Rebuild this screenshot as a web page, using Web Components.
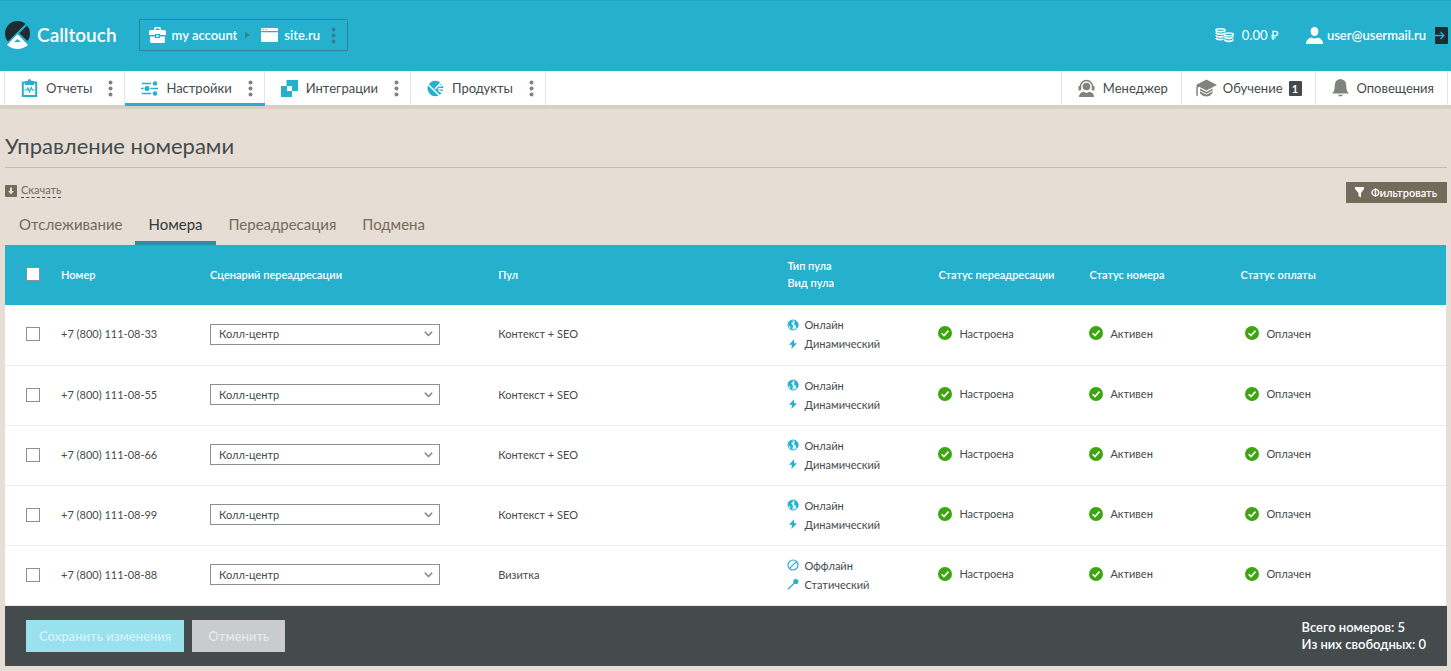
<!DOCTYPE html>
<html lang="ru">
<head>
<meta charset="utf-8">
<title>Calltouch — Управление номерами</title>
<meta name="viewport" content="width=device-width, initial-scale=1">
<style>
  html {
    --brand: #25b0cd;
    --brand-dark: #2a8fa8;
    --ink: #444b4c;
    --sand: #e6ddd4;
    --sand-line: #c6bba9;
    --taupe: #756b5b;
    --grey: #80827d;
    --line: #e4e6e6;
    --green: #3da511;
  }
  body {
    margin: 0;
    background: var(--sand);
    color: var(--ink);
    font: 11px/18px Lato, "Open Sans", sans-serif;
  }
  main { display: block; padding: 0 4px 5px 5px; }
</style>
</head>
<body>
<top-bar></top-bar>
<main-nav>
  <nav-item icon="report" menu>Отчеты</nav-item>
  <nav-item icon="sliders" menu active>Настройки</nav-item>
  <nav-item icon="squares" menu>Интеграции</nav-item>
  <nav-item icon="pie" menu>Продукты</nav-item>
  <nav-item slot="end" icon="agent" muted>Менеджер</nav-item>
  <nav-item slot="end" icon="cap" badge="1" muted wide>Обучение</nav-item>
  <nav-item slot="end" icon="bell" muted>Оповещения</nav-item>
</main-nav>
<main>
  <page-heading>Управление номерами</page-heading>
  <page-tools></page-tools>
  <tab-strip></tab-strip>
  <numbers-table></numbers-table>
  <action-bar>
    <div>Всего номеров: 5</div>
    <div>Из них свободных: 0</div>
  </action-bar>
</main>

<script>
const ICONS = {
  logo: ['0 0 25 28', `<circle cx="12.5" cy="12.5" r="12.5" fill="#1e2b31"/>
    <path d="M12.5 12.5 0 24v4h25v-4z" fill="#25b0cd"/>
    <path d="M22 3 1 24M12.5 12 25 24" stroke="#25b0cd" stroke-width="2.2" fill="none"/>
    <path d="M12.5 13.2 2 24.1Q7 28 12.5 28t10.5-3.900z" fill="#fff"/>
    <path d="M12.5 18l-3.500 3h7z" fill="#25b0cd"/>`],
  briefcase: ['0 0 17 16', `<path d="M5 3V1.500Q5 0 6.500 0h4Q12 0 12 1.500V3h3.500Q17 3 17 4.500V8h-6V7H6v1H0V4.500Q0 3 1.500 3zm1.500 0h4V1.500h-4zM1 9.500h5V11h5V9.500h5v5Q16 16 14.500 16h-12Q1 16 1 14.500zM7.500 8h2v2h-2z" fill="currentColor" fill-rule="evenodd"/>`],
  window: ['0 0 17 14', `<path d="M1 0h15q1 0 1 1v2H0V1q0-1 1-1zM0 4.200h17V13q0 1-1 1H1q-1 0-1-1z" fill="currentColor"/><path d="M2 1.500h1.200M4.500 1.500h1.200" stroke="#25b0cd"/>`],
  coins: ['0 0 19 15', `<g fill="none" stroke="currentColor" stroke-width="1.600"><ellipse cx="5.500" cy="2.200" rx="4.600" ry="1.400"/><path d="M.8 4.500q1 1.700 4.700 1.700t4.700-1.300M.8 7.300q1 1.600 4.700 1.600l3-.3M.8 10q1 1.600 4.700 1.600l3-.3"/><ellipse cx="13.800" cy="6.400" rx="4.500" ry="1.400"/><path d="M9.200 8.700q1 1.700 4.600 1.700t4.500-1.700M9.200 11.400q1 2 4.600 2t4.500-2"/></g>`],
  user: ['0 0 17 17', `<ellipse cx="8.500" cy="4.500" rx="3.900" ry="4.500" fill="currentColor"/><path d="M0 17q0-5 5-6.500Q8.500 12.500 12 10.500q5 1.500 5 6.500z" fill="currentColor"/>`],
  exit: ['0 0 13 17', `<rect width="13" height="17" rx="1" fill="#1e2b31"/><path d="M0 8.500h9M5.500 5l3.500 3.500L5.500 12" fill="none" stroke="#25b0cd" stroke-width="1.300"/>`],
  report: ['0 0 17 18', `<path d="M1.800 3.500h13.400V17H1.800z" fill="none" stroke="currentColor" stroke-width="2"/><path d="M4 2h2.500Q7 0 8.500 0t2 2H13v4H4z" fill="currentColor"/><path d="M3.500 11h2.300l1-2 1.700 4 1.700-4.500 1.200 2.500h2.100" fill="none" stroke="currentColor" stroke-width="1.200"/>`],
  sliders: ['0 0 17 17', `<path d="M1 3.500h9M0 8.500h17M1 13.500h9" stroke="currentColor" stroke-width="1.500"/><circle cx="14" cy="3.500" r="2.300" fill="currentColor"/><circle cx="6" cy="8.500" r="3.400" fill="#fff"/><circle cx="6" cy="8.500" r="2.500" fill="currentColor"/><circle cx="14" cy="13.500" r="2.300" fill="currentColor"/>`],
  squares: ['0 0 17 17', `<path d="M5.500 0H17v11H11v6H0V6h5.500zM6 6v5h5V6z" fill="currentColor" fill-rule="evenodd"/>`],
  pie: ['0 0 17 17', `<circle cx="8.300" cy="8.500" r="7.800" fill="currentColor"/><path d="M0 3.500 14 17M8 9l7-7.500M11 8.800h6M11.500 10.500l5 2.500M12 6.500l4.500-2" stroke="#fff" stroke-width="1.500" fill="none"/>`],
  agent: ['0 0 17 18', `<path d="M2.500 11V7.500a6 6 0 0 1 12 0V11" fill="none" stroke="currentColor" stroke-width="1.500"/><path d="M.5 7h2v4.500h-2zM14.500 7h2v4.500h-2z" fill="currentColor"/><circle cx="8.500" cy="7.500" r="3.800" fill="currentColor"/><path d="M1 18q0-4.500 4.500-5.300L8.500 14l3-1.300Q16 13.500 16 18z" fill="currentColor"/>`],
  cap: ['0 0 21 18', `<path d="M10.500.5 21 6 10.500 11.500 3 7.800l-1.200 1V16q-1.300 2.500-1.500 0V8.200L1 6.700 0 6z" fill="currentColor"/><path d="M4 9.500v5Q7 17.500 10.500 17.500T16.500 14V9.500l-6 3.500z" fill="currentColor"/><path d="M4 12l6.500 3.200L16.500 12" stroke="#fff" stroke-width="1" fill="none"/>`],
  bell: ['0 0 17 18', `<path d="M8.500 0q5.800.5 5.800 7 0 5.500 2.700 7.500H0Q2.700 12.500 2.700 7q0-6.500 5.800-7zM6 15.700h5q-.5 1.800-2.500 1.800T6 15.700z" fill="currentColor"/>`],
  download: ['0 0 12 12', `<rect width="12" height="12" rx="1" fill="currentColor"/><path d="M5 2.500h2V6h2L6 9.500 3 6h2z" fill="#e6ddd4"/>`],
  filter: ['0 0 10 11', `<path d="M0 0h9v2L6 6v4.500L3.500 9V6L0 2z" fill="currentColor"/>`],
  check: ['0 0 14 14', `<circle cx="7" cy="7" r="7" fill="currentColor"/><path d="M3.600 7.200 6 9.600l4.500-5" fill="none" stroke="#fff" stroke-width="1.600"/>`],
  globe: ['0 0 12 12', `<circle cx="6" cy="6" r="5" fill="#e3f5f9" stroke="currentColor" stroke-width="1"/><path d="M1.200 3.500 4 1.200l2 .8-.5 1.500L4 4.500l1.500 1.200L6 7.500 5 11 3.500 9.500 3.200 7.500 1.200 6zM7.500 1.200l3 2L11.500 6l-1 2.800L9 8.500 8.800 6.500 7 5.500 7.500 3.800z" fill="currentColor"/>`],
  bolt: ['0 0 12 12', `<path d="M7 1.200 2 6.800h2.800L4.500 11 10 5.200H7z" fill="currentColor"/>`],
  off: ['0 0 12 12', `<circle cx="6" cy="6" r="5" fill="none" stroke="currentColor" stroke-width="1.200"/><path d="M2.800 9.200 9.200 2.800" stroke="currentColor" stroke-width="1.200"/>`],
  pin: ['0 0 12 12', `<circle cx="8.800" cy="3.500" r="2.600" fill="currentColor"/><path d="M.8 11.200 7.500 5" stroke="currentColor" stroke-width="1.200"/>`],
  chevron: ['0 0 9 6', `<path d="M.8.8 4.500 4.500 8.200.8" fill="none" stroke="currentColor" stroke-width="1.500"/>`],
  arrow: ['0 0 5 6', `<path d="M0 0l5 3-5 3z" fill="currentColor"/>`],
  dots: ['0 0 5 17', `<circle cx="2.500" cy="2.500" r="2" fill="currentColor"/><circle cx="2.500" cy="8.500" r="2" fill="currentColor"/><circle cx="2.500" cy="14.500" r="2" fill="currentColor"/>`]
};

class Base extends HTMLElement {
  connectedCallback() {
    if (this.shadowRoot) return;
    const t = document.createElement('template');
    t.innerHTML = `<style>*{box-sizing:border-box}${this.css()}</style>${this.html()}`;
    this.attachShadow({ mode: 'open' }).append(t.content.cloneNode(true));
  }
}

customElements.define('line-icon', class extends Base {
  css() {
    const [, , w, h] = ICONS[this.getAttribute('name')][0].split(' ');
    return `:host{display:block;flex:none;width:${w}px;height:${h}px} svg{display:block;width:100%;height:100%}`;
  }
  html() {
    const [box, body] = ICONS[this.getAttribute('name')];
    return `<svg viewBox="${box}" aria-hidden="true">${body}</svg>`;
  }
});

customElements.define('top-bar', class extends Base {
  css() {
    return `
      :host{display:block;color:#fff;font-size:13px;font-weight:600}
      header{display:flex;align-items:center;height:71px;padding:0 3px 1px 5px;background:var(--brand);box-shadow:inset 0 1px #24a5c1}
      a{color:inherit;text-decoration:none;display:flex;align-items:center}
      .logo{font-size:19px;gap:7px}
      .path{display:flex;align-items:center;height:32px;margin-left:22px;padding:0 11px 0 9px;border:1px solid #348194;border-radius:1px}
      .path a{gap:6px}
      .path a+line-icon{margin:0 11px 0 8px;color:#348194}
      button{display:flex;margin:0 0 0 11px;padding:0;border:0;background:none;color:#348194}
      .end{display:flex;align-items:center;margin-left:auto}
      .money{font-weight:400;gap:8px;margin-right:27px}
      .user{gap:4px;margin-right:9px}`;
  }
  html() {
    return `<header>
      <a class="logo" href="#"><line-icon name="logo"></line-icon><span>Calltouch</span></a>
      <nav class="path" aria-label="Аккаунт">
        <a href="#"><line-icon name="briefcase"></line-icon><span>my account</span></a>
        <line-icon name="arrow"></line-icon>
        <a href="#"><line-icon name="window"></line-icon><span>site.ru</span></a>
        <button type="button" aria-label="Меню"><line-icon name="dots"></line-icon></button>
      </nav>
      <div class="end">
        <a class="money" href="#"><line-icon name="coins"></line-icon><span>0.00 ₽</span></a>
        <a class="user" href="#"><line-icon name="user"></line-icon><span>user@usermail.ru</span></a>
        <a href="#" aria-label="Выйти"><line-icon name="exit"></line-icon></a>
      </div>
    </header>`;
  }
});

customElements.define('main-nav', class extends Base {
  css() {
    return `
      :host{display:block;background:#fff;border-bottom:4px solid #d7cfc5}
      nav{display:flex;justify-content:space-between;height:34px;padding:0 3px 0 4px}
      div{display:flex}
      div::before{content:"";width:1px;background:var(--line)}`;
  }
  html() {
    return `<nav><div><slot></slot></div><div><slot name="end"></slot></div></nav>`;
  }
});

customElements.define('nav-item', class extends Base {
  css() {
    return `
      :host{display:flex;align-items:center;position:relative;border-right:1px solid var(--line);font-size:13px}
      :host([active])::after{content:"";position:absolute;left:0;right:-1px;bottom:-1px;height:3px;background:var(--brand)}
      a{display:flex;align-items:center;gap:8px;height:100%;padding:0 13px 0 16px;color:inherit;text-decoration:none}
      a line-icon{color:var(--brand)}
      :host([menu]) a{padding-right:16px}
      :host([muted]) a line-icon{color:var(--grey)}
      :host([wide]) a{padding-left:14px;gap:6px}
      b{width:13px;height:15px;border-radius:1px;background:var(--ink);color:#fff;font-size:11px;line-height:15px;text-align:center}
      button{display:flex;margin:0 11px 0 0;padding:0;border:0;background:none;color:var(--grey)}`;
  }
  html() {
    const badge = this.getAttribute('badge');
    return `<a href="#"><line-icon name="${this.getAttribute('icon')}"></line-icon><span><slot></slot></span>${badge ? `<b>${badge}</b>` : ''}</a>` +
      (this.hasAttribute('menu') ? `<button type="button" aria-label="Ещё"><line-icon name="dots"></line-icon></button>` : '');
  }
});

customElements.define('page-heading', class extends Base {
  css() {
    return `:host{display:block;padding-top:23px;border-bottom:1px solid var(--sand-line)}
      h1{margin:0;padding-bottom:7px;font-size:22px;line-height:28px;font-weight:400}`;
  }
  html() { return `<h1><slot></slot></h1>`; }
});

customElements.define('page-tools', class extends Base {
  css() {
    return `
      :host{display:flex;justify-content:space-between;align-items:flex-start;padding-top:14px}
      a{display:flex;align-items:center;gap:4px;padding-top:1px;color:var(--taupe);text-decoration:none}
      span{line-height:14px;border-bottom:1px dashed var(--ink)}
      button{display:flex;align-items:center;gap:6px;height:21px;margin:0;padding:0 10px 0 9px;border:0;background:var(--taupe);color:#fff;font:600 11px/18px Lato,sans-serif}`;
  }
  html() {
    return `<a href="#"><line-icon name="download"></line-icon><span>Скачать</span></a>
      <button type="button"><line-icon name="filter"></line-icon>Фильтровать</button>`;
  }
});

customElements.define('tab-strip', class extends Base {
  css() {
    return `
      :host{display:block}
      nav{display:flex;height:42px;padding-left:1px}
      a{padding:11px 13px 0;border-bottom:4px solid transparent;color:var(--taupe);font-size:15px;line-height:20px;text-decoration:none}
      a[aria-current]{border-color:var(--brand-dark);color:#333a3b}`;
  }
  html() {
    return `<nav><a href="#">Отслеживание</a><a href="#" aria-current="page">Номера</a><a href="#">Переадресация</a><a href="#">Подмена</a></nav>`;
  }
});

customElements.define('icon-label', class extends Base {
  css() {
    return `:host{display:flex;align-items:center;gap:5px;line-height:19px}
      :host([status]){gap:7px}
      line-icon{color:var(--brand)} :host([status]) line-icon{color:var(--green)}`;
  }
  html() {
    return `<line-icon name="${this.getAttribute('icon')}"></line-icon><span><slot></slot></span>`;
  }
});

customElements.define('numbers-table', class extends Base {
  css() {
    return `
      :host{display:block;padding-right:1px}
      table{width:100%;border-collapse:separate;border-spacing:0;table-layout:fixed;background:#fff;border-bottom:1px solid #ecedea}
      th,td{height:60px;padding:0 0 2px;text-align:left;vertical-align:middle;font-size:11px}
      th{background:var(--brand);color:#fff;font-weight:600;line-height:17px}
      th:nth-child(n+5),td:nth-child(n+5){padding-left:1px}
      tr+tr td{border-top:1px solid #ecedea}
      .c-check{width:56px}.c-num{width:149px}.c-wide{width:20%}.c-status{width:151px}
      .check{padding-left:21px}
      input{display:block;appearance:none;width:14px;height:14px;margin:0;background:#fff;border:1px solid #8c8f8f}
      .pick{display:grid;width:230px;align-items:center}
      .pick>*{grid-area:1/1}
      select{appearance:none;width:100%;height:21px;margin:0;padding:0 24px 0 8px;border:1px solid #8c8f8f;border-radius:0;background:#fff;color:var(--ink);font:11px/18px Lato,sans-serif}
      .pick line-icon{justify-self:end;margin-right:7px;color:var(--grey);pointer-events:none}
      .state{padding-bottom:4px}
      td.pay{padding-left:6px}`;
  }
  html() {
    const rows = [
      ['+7 (800) 111-08-33', 'Контекст + SEO', true],
      ['+7 (800) 111-08-55', 'Контекст + SEO', true],
      ['+7 (800) 111-08-66', 'Контекст + SEO', true],
      ['+7 (800) 111-08-99', 'Контекст + SEO', true],
      ['+7 (800) 111-08-88', 'Визитка', false]
    ];
    const row = ([num, pool, online]) => `<tr>
      <td class="check"><input type="checkbox" aria-label="Выбрать ${num}"></td>
      <td>${num}</td>
      <td><div class="pick"><select aria-label="Сценарий для ${num}"><option>Колл-центр</option></select><line-icon name="chevron"></line-icon></div></td>
      <td>${pool}</td>
      <td>${online
        ? '<icon-label icon="globe">Онлайн</icon-label><icon-label icon="bolt">Динамический</icon-label>'
        : '<icon-label icon="off">Оффлайн</icon-label><icon-label icon="pin">Статический</icon-label>'}</td>
      <td class="state"><icon-label status icon="check">Настроена</icon-label></td>
      <td class="state"><icon-label status icon="check">Активен</icon-label></td>
      <td class="pay state"><icon-label status icon="check">Оплачен</icon-label></td>
    </tr>`;
    return `<table>
      <colgroup><col class="c-check"><col class="c-num"><col class="c-wide"><col class="c-wide"><col class="c-status"><col class="c-status"><col class="c-status"><col></colgroup>
      <thead><tr><th class="check"><input type="checkbox" aria-label="Выбрать все"></th><th>Номер</th><th>Сценарий переадресации</th><th>Пул</th><th>Тип пула<br>Вид пула</th><th>Статус переадресации</th><th>Статус номера</th><th>Статус оплаты</th></tr></thead>
      <tbody>${rows.map(row).join('')}</tbody></table>`;
  }
});

customElements.define('action-bar', class extends Base {
  css() {
    return `
      :host{display:flex;align-items:center;gap:8px;height:60px;padding:0 21px;background:var(--ink);box-sizing:border-box}
      button{height:32px;margin:0;padding:0 13px;border:0;background:#9ae1ee;color:#d3f2f8;font:600 13px/18px Lato,sans-serif}
      button+button{padding:0 16px;background:#c9cbcd;color:#e7e8ea}
      .total{margin-left:auto;color:#fff;font-size:13px;line-height:17px;font-weight:600}`;
  }
  html() {
    return `<button type="button" disabled>Сохранить изменения</button><button type="button" disabled>Отменить</button>
      <div class="total"><slot></slot></div>`;
  }
});
</script>
</body>
</html>
